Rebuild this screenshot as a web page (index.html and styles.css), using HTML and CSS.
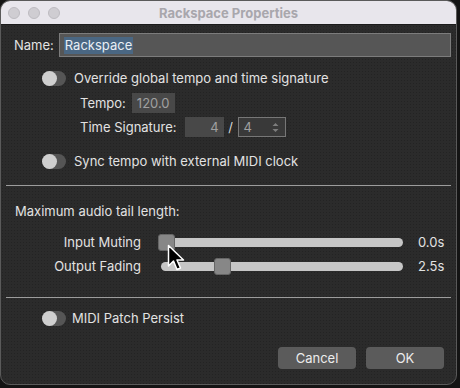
FILE: index.html
```html
<!DOCTYPE html>
<html lang="en">
<head>
    <meta charset="UTF-8">
    <title>Rackspace Properties</title>
    <link rel="stylesheet" href="styles.css">
</head>
<body>
    <div class="window">
        <div class="titlebar">
            <div class="lights">
                <span class="light"></span>
                <span class="light"></span>
                <span class="light"></span>
            </div>
            <div class="title">Rackspace Properties</div>
            <div></div>
        </div>
        <div class="content">
            <div class="row name-row">
                <span class="lbl">Name:</span>
                <div class="name-input"><span class="sel">Rackspace</span></div>
            </div>

            <div class="row toggle-row override">
                <span class="toggle"><span class="knob"></span></span>
                <span>Override global tempo and time signature</span>
            </div>
            <div class="row sub-row tempo">
                <span>Tempo:</span>
                <span class="field tempo-field">120.0</span>
            </div>
            <div class="row sub-row timesig">
                <span>Time Signature:</span>
                <span class="field num-field">4</span>
                <span class="slash">/</span>
                <span class="field spin-field">4
                    <svg class="spin" width="7" height="11" viewBox="0 0 7 11"><path d="M0.5 4 L3.5 1 L6.5 4 Z M0.5 7 L3.5 10 L6.5 7 Z" fill="#7d7d7d"/></svg>
                </span>
            </div>
            <div class="row toggle-row sync">
                <span class="toggle"><span class="knob"></span></span>
                <span>Sync tempo with external MIDI clock</span>
            </div>

            <div class="divider first"></div>

            <div class="row heading">Maximum audio tail length:</div>
            <div class="row slider-row muting">
                <span class="slabel">Input Muting</span>
                <div class="track">
                    <span class="thumb" style="left: 0%"></span>
                </div>
                <span class="val">0.0s</span>
            </div>
            <div class="row slider-row fading">
                <span class="slabel">Output Fading</span>
                <div class="track">
                    <span class="thumb" style="left: 22%"></span>
                </div>
                <span class="val">2.5s</span>
            </div>

            <div class="divider second"></div>

            <div class="row toggle-row midi">
                <span class="toggle"><span class="knob"></span></span>
                <span>MIDI Patch Persist</span>
            </div>

            <div class="row buttons">
                <span class="btn">Cancel</span>
                <span class="btn">OK</span>
            </div>
        </div>
        <svg class="cursor" width="18" height="28" viewBox="0 0 18 28">
            <path d="M1.5 1.5 L1.5 22 L6.5 17 L10 25.5 L13.5 24 L10 16 L16.5 16 Z" fill="#000" stroke="#fff" stroke-width="1.5" stroke-linejoin="round"/>
        </svg>
    </div>
</body>
</html>
```

FILE: styles.css
```css
*{
    margin: 0;
    padding: 0;
    box-sizing: border-box;
}
body{
    background: #141414;
    font-family: Inter, "Noto Sans", sans-serif;
    font-size: 13px;
    color: #e2e2e2;
}
.window{
    width: 457px;
    height: 385px;
    border: 1px solid #5a5a5a;
    border-radius: 10px;
    overflow: hidden;
    background-color: #2b2b2b;
    background-image: radial-gradient(#232323 0.6px, transparent 0.9px);
    background-size: 3px 3px;
    position: relative;
}
.titlebar{
    height: 24px;
    background: #e8e6ec;
    display: grid;
    grid-template-columns: 1fr auto 1fr;
    align-items: center;
    border-bottom: 1px solid #1b1b1b;
}
.lights{
    display: flex;
    gap: 8px;
    padding-left: 7px;
}
.light{
    width: 12px;
    height: 12px;
    border-radius: 50%;
    background: #cfcdd2;
    border: 1px solid #bdbbc0;
}
.title{
    font-weight: 700;
    color: #a9a7ac;
    font-size: 13px;
}
.content{
    padding: 0 0 0 0;
}
.row{
    display: flex;
    align-items: center;
}
.name-row{
    margin-top: 8px;
    height: 24px;
    padding-left: 13px;
    gap: 5px;
}
.name-input{
    width: 392px;
    height: 24px;
    background: #565656;
    border: 1px solid #7c7c7c;
    display: flex;
    align-items: center;
    padding-left: 4px;
}
.sel{
    background: #4a6783;
    color: #e8eef4;
    line-height: 17px;
    padding: 0 1px;
}
.toggle-row{
    height: 18px;
    padding-left: 41px;
    gap: 8px;
}
.toggle{
    width: 24px;
    height: 15px;
    border-radius: 8px;
    background: #555;
    position: relative;
}
.knob{
    position: absolute;
    left: 0;
    top: 0;
    width: 15px;
    height: 15px;
    border-radius: 50%;
    background: #cfcfcf;
}
.override{
    margin-top: 12px;
}
.sub-row{
    height: 20px;
    padding-left: 79px;
    gap: 6px;
}
.tempo{
    margin-top: 6px;
}
.timesig{
    margin-top: 4px;
    gap: 0;
}
.field{
    height: 20px;
    background: #484848;
    color: #a0a0a0;
    display: flex;
    align-items: center;
}
.tempo-field{
    width: 43px;
    padding-left: 5px;
}
.num-field{
    width: 39px;
    margin-left: 8px;
    justify-content: flex-end;
    padding-right: 5px;
}
.slash{
    width: 14px;
    text-align: center;
    color: #d8d8d8;
}
.spin-field{
    width: 48px;
    background: #393939;
    border: 1px solid #777;
    padding-left: 5px;
    justify-content: space-between;
    padding-right: 6px;
}
.sync{
    margin-top: 15px;
}
.divider{
    height: 1px;
    background: #9c9c9c;
    margin: 0 5px;
}
.divider.first{
    margin-top: 15px;
}
.heading{
    margin-top: 17px;
    height: 16px;
    padding-left: 14px;
}
.slider-row{
    height: 18px;
}
.muting{
    margin-top: 14px;
}
.fading{
    margin-top: 6px;
}
.slabel{
    width: 140px;
    text-align: right;
}
.track{
    margin-left: 20px;
    width: 242px;
    height: 9px;
    border-radius: 5px;
    background: #c6c6c6;
    position: relative;
}
.muting .track{
    margin-left: 17px;
    width: 245px;
}
.thumb{
    position: absolute;
    top: -4px;
    width: 17px;
    height: 17px;
    border-radius: 3px;
    background: #878787;
    border: 1px solid #666;
}
.val{
    margin-left: 15px;
}
.second{
    margin-top: 22px;
}
.midi{
    margin-top: 11px;
    gap: 6px;
}
.buttons{
    margin-top: 20px;
    justify-content: flex-end;
    gap: 10px;
    padding-right: 12px;
}
.btn{
    width: 78px;
    height: 22px;
    border-radius: 4px;
    background: #5b5b5b;
    color: #ececec;
    display: flex;
    align-items: center;
    justify-content: center;
}
.cursor{
    position: absolute;
    left: 166px;
    top: 243px;
}
```
